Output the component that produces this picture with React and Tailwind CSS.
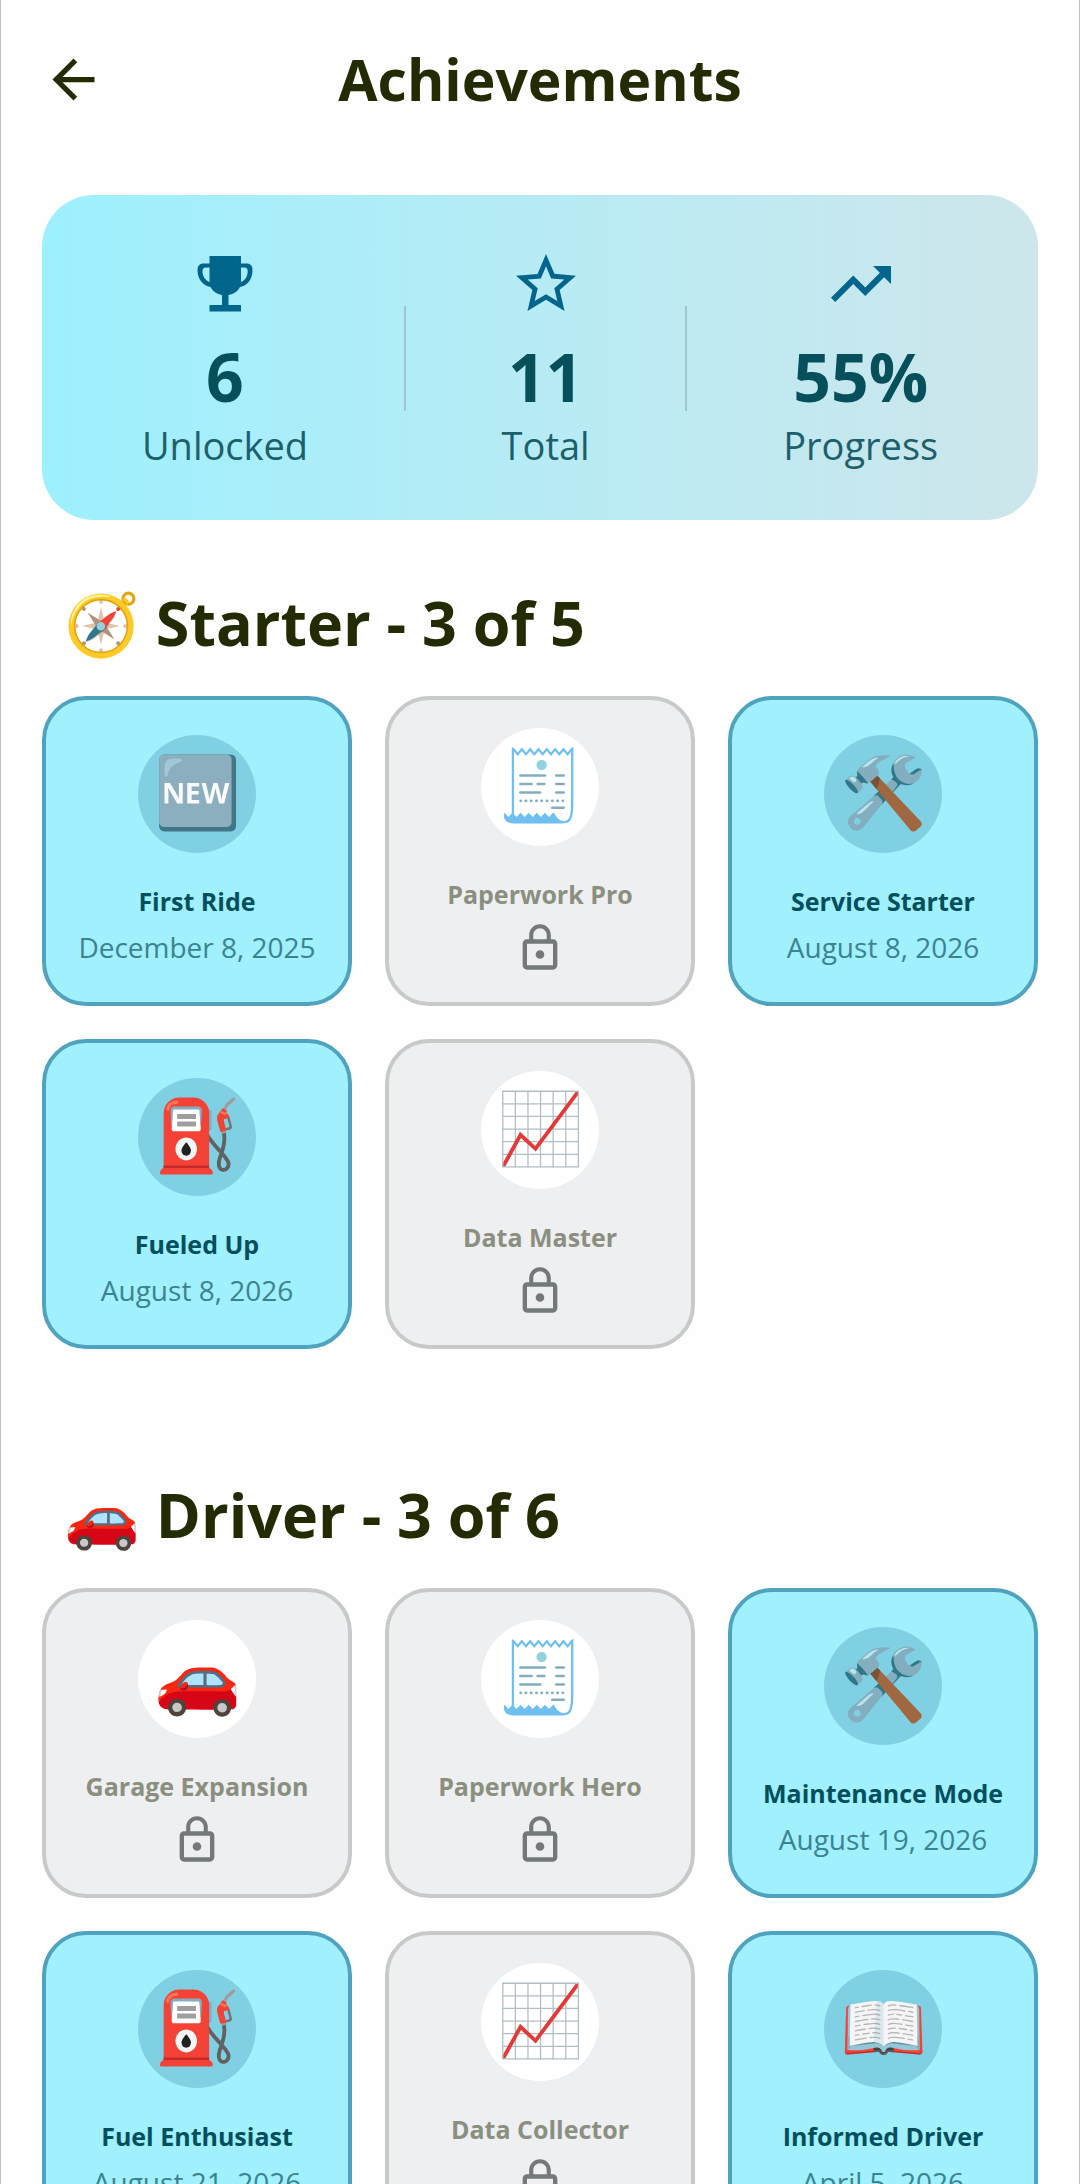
import { MdArrowBack, MdLockOutline, MdStarBorder, MdTrendingUp } from "react-icons/md";

const sections = [
    {
        icon: "🧭",
        name: "Starter",
        items: [
            { icon: "🆕", title: "First Ride", date: "December 8, 2025" },
            { icon: "🧾", title: "Paperwork Pro" },
            { icon: "🛠️", title: "Service Starter", date: "August 8, 2026" },
            { icon: "⛽", title: "Fueled Up", date: "August 8, 2026" },
            { icon: "📈", title: "Data Master" },
        ],
    },
    {
        icon: "🚗",
        name: "Driver",
        items: [
            { icon: "🚗", title: "Garage Expansion" },
            { icon: "🧾", title: "Paperwork Hero" },
            { icon: "🛠️", title: "Maintenance Mode", date: "August 19, 2026" },
            { icon: "⛽", title: "Fuel Enthusiast", date: "August 21, 2026" },
            { icon: "📈", title: "Data Collector" },
            { icon: "📖", title: "Informed Driver", date: "April 5, 2026" },
        ],
    },
];

const TrophyIcon = ({ className }) => (
    <svg viewBox="0 0 72 72" className={className} fill="currentColor" aria-hidden="true">
        <path d="M20.500 8H52v7.500h5.500c4 0 6 2.500 6 6.500 0 9-4.500 15.500-12.500 17-2.200 4.500-6 7-11.500 8v10H52v6.500H20.500V57H33V47c-5.500-1-9.300-3.500-11.500-8C13.500 37.500 8.500 31 8.500 22c0-4 2-6.500 6-6.500h6zM20.500 19.500h-3.500c-2.300 0-3.500 1.300-3.500 3.500 0 5 2.500 9 7 11zM52 19.500V34c4.500-2 6.700-6 6.700-11 0-2.200-1.200-3.500-3.200-3.500z" />
    </svg>
);

const Stat = ({ icon: Icon, value, label }) => (
    <div className="flex flex-col items-center">
        <Icon className="size-[72px] text-[#02658c]" />
        <span className="mt-[14px] text-[66px] leading-[84px] font-bold text-[#05505b]">{value}</span>
        <span className="mt-1 text-[38px] leading-[46px] text-[#1c606c]">{label}</span>
    </div>
);

const Divider = () => <div className="h-[105px] w-[2px] bg-[#a0c5cf]" />;

const AchievementCard = ({ icon, title, date }) => {
    const cardStyle = date ? "border-[#4fa3bf] bg-[#a0f0fe]" : "border-[#c8caca] bg-[#edeff1]";

    return (
        <li className={`flex aspect-square flex-col items-center justify-center rounded-[44px] border-4 ${cardStyle}`}>
            <div
                className={`flex size-[118px] items-center justify-center rounded-full pb-2 text-[70px] leading-none ${date ? "bg-[#80d0e3]" : "bg-white"}`}
            >
                {icon}
            </div>
            <h3
                className={`mt-[30px] text-[25px] leading-9 font-bold whitespace-nowrap ${date ? "text-[#034f5d]" : "text-[#8b8f80]"}`}
            >
                {title}
            </h3>
            {date ? (
                <p className="mt-2 text-[28px] leading-10 whitespace-nowrap text-[#3c8390]">{date}</p>
            ) : (
                <MdLockOutline className="mt-[10px] size-[52px] text-[#73797b]" title="Locked" />
            )}
        </li>
    );
};

const Section = ({ icon, name, items }) => {
    const unlocked = items.filter((item) => item.date).length;

    return (
        <section className="pt-[60px] pb-[63px]">
            <h2 className="mb-[30px] px-[22px] text-[61px] leading-[86px] font-bold">
                {icon} {name} - {unlocked} of {items.length}
            </h2>
            <ul className="grid grid-cols-3 gap-[33px]">
                {items.map((item) => (
                    <AchievementCard key={item.title} {...item} />
                ))}
            </ul>
        </section>
    );
};

export default function App() {
    const all = sections.flatMap((section) => section.items);
    const unlocked = all.filter((item) => item.date).length;
    const progress = Math.round((unlocked / all.length) * 100);

    return (
        <div className="h-screen overflow-y-auto border-x border-[#bfc1c1] bg-[#fefefe] px-[41px] font-['Open_Sans',sans-serif] text-[#232b02] [scrollbar-width:none]">
            <header className="flex items-center justify-between pt-12">
                <button type="button" aria-label="Back">
                    <MdArrowBack className="size-[63px]" />
                </button>
                <h1 className="text-[57px] leading-[63px] font-bold">Achievements</h1>
                <div className="w-[63px]" />
            </header>

            <main>
                <div className="mt-[84px] flex items-center justify-around rounded-[52px] bg-linear-to-r from-[#9df0fe] to-[#cde6eb] px-[52px] pt-[53px] pb-[52px]">
                    <Stat icon={TrophyIcon} value={unlocked} label="Unlocked" />
                    <Divider />
                    <Stat icon={MdStarBorder} value={all.length} label="Total" />
                    <Divider />
                    <Stat icon={MdTrendingUp} value={`${progress}%`} label="Progress" />
                </div>

                {sections.map((section) => (
                    <Section key={section.name} {...section} />
                ))}
            </main>
        </div>
    );
}
